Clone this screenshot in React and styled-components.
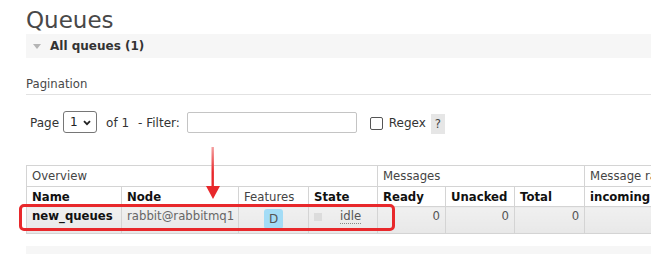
import React from "react";
import styled, { createGlobalStyle } from "styled-components";

const Global = createGlobalStyle`
  html, body { margin: 0; padding: 0; background: #fff; overflow: hidden; }
  body {
    font-family: "DejaVu Sans", Verdana, sans-serif;
    font-size: 11.7px;
    color: #484848;
  }
`;

const Page = styled.div`
  position: relative;
  padding-left: 26px;
  width: 900px;
  height: 254px;
  overflow: hidden;
`;

const Title = styled.h1`
  margin: 0;
  height: 34px;
  line-height: 40px;
  font-size: 23px;
  font-weight: normal;
  color: #484848;
`;

const SectionBar = styled.div`
  height: 24px;
  width: 625px;
  background: #f6f6f6;
  display: flex;
  align-items: center;
  padding-left: 7px;
  box-sizing: border-box;
  font-size: 12px;
  font-weight: bold;
  color: #333;
`;

const Triangle = styled.span`
  width: 0;
  height: 0;
  border-left: 4.5px solid transparent;
  border-right: 4.5px solid transparent;
  border-top: 5px solid #b4b4b4;
  margin-right: 9px;
  margin-top: 1px;
`;

const SubHeading = styled.h3`
  margin: 17px 0 0;
  height: 19px;
  line-height: 19px;
  font-size: 11.7px;
  font-weight: normal;
  color: #484848;
  border-bottom: 1px solid #e2e2e2;
  width: 625px;
`;

const FilterRow = styled.div`
  margin-top: 16px;
  padding-left: 4px;
  height: 22px;
  display: flex;
  align-items: center;
  color: #333;
  font-size: 12px;
`;

const Label = styled.span`
  margin-left: ${(p) => p.$ml || 0}px;
  margin-top: 1px;
  white-space: pre;
`;

const SelectWrap = styled.div`
  position: relative;
  margin-left: 4px;
  width: 34px;
  height: 22px;
  box-sizing: border-box;
  border: 1px solid #767676;
  border-radius: 3px;
`;

const Select = styled.select`
  appearance: none;
  border: none;
  background: transparent;
  width: 100%;
  height: 100%;
  padding: 0 0 0 6px;
  font-family: inherit;
  font-size: 12px;
  color: #222;
  outline: none;
`;

const Chevron = styled.svg`
  position: absolute;
  right: 5px;
  top: 8px;
  pointer-events: none;
`;

const TextInput = styled.input`
  margin-left: 7px;
  width: 170px;
  height: 21px;
  box-sizing: border-box;
  border: 1px solid #c4c4c4;
  border-radius: 2px;
  padding: 0 4px;
  outline: none;
`;

const Check = styled.input`
  appearance: none;
  margin: 2px 0 0 13px;
  width: 13px;
  height: 13px;
  box-sizing: border-box;
  border: 1px solid #555;
  border-radius: 2px;
  background: #fff;
`;

const Help = styled.span`
  margin-left: 5px;
  margin-top: 4px;
  width: 14px;
  height: 20px;
  background: #e6e6e6;
  color: #444;
  display: inline-flex;
  align-items: center;
  justify-content: center;
  font-size: 11.7px;
`;

const Table = styled.table`
  margin-top: 32px;
  border-collapse: collapse;
  table-layout: fixed;
  width: 680px;
  font-size: 11.7px;
`;

const GroupTh = styled.th`
  height: 20px;
  padding: 0 5px;
  border: 1px solid #d4d4d4;
  text-align: left;
  font-weight: normal;
  color: #444;
  background: #fff;
  white-space: nowrap;
  overflow: hidden;
`;

const ColTh = styled.th`
  height: 19px;
  padding: 0 5px;
  border: 1px solid #d4d4d4;
  text-align: left;
  font-weight: ${(p) => (p.$normal ? "normal" : "bold")};
  color: ${(p) => (p.$normal ? "#444" : "#111")};
  background: #fff;
  white-space: nowrap;
  overflow: hidden;
`;

const Td = styled.td`
  height: 27px;
  box-sizing: border-box;
  padding: 2px 5px 0;
  vertical-align: top;
  line-height: 15px;
  border: 1px solid #d4d4d4;
  background: linear-gradient(#f0f0f0, #e8e8e8);
  text-align: ${(p) => p.$align || "left"};
  color: ${(p) => p.$color || "#555"};
  font-weight: ${(p) => (p.$bold ? "bold" : "normal")};
  white-space: nowrap;
`;

const Badge = styled.abbr`
  display: inline-flex;
  vertical-align: top;
  align-items: center;
  justify-content: center;
  width: 19px;
  height: 20px;
  border-radius: 3px;
  background: #a3dcf6;
  color: #555;
  font-size: 12px;
  text-decoration: none;
`;

const StateCell = styled.div`
  display: flex;
  align-items: center;
  height: 15px;
`;

const StateSquare = styled.span`
  width: 8px;
  height: 8px;
  background: #dcdcdc;
  margin-right: 18px;
`;

const Idle = styled.abbr`
  color: #555;
  text-decoration: none;
  border-bottom: 1px dotted #888;
  line-height: 14px;
`;

const BottomBar = styled.div`
  margin-top: 12px;
  height: 20px;
  width: 625px;
  background: #f6f6f6;
`;

const Highlight = styled.div`
  position: absolute;
  left: 19px;
  top: 204px;
  width: 376px;
  height: 27px;
  box-sizing: border-box;
  border: 3px solid #e8282b;
  border-radius: 5px;
  pointer-events: none;
`;

const Arrow = styled.svg`
  position: absolute;
  left: 204px;
  top: 145px;
  pointer-events: none;
`;

export default function App() {
  return (
    <>
      <Global />
      <Page>
        <Title>Queues</Title>
        <SectionBar>
          <Triangle />
          All queues (1)
        </SectionBar>
        <SubHeading>Pagination</SubHeading>
        <FilterRow>
          <Label>Page</Label>
          <SelectWrap>
            <Select defaultValue="1">
              <option value="1">1</option>
            </Select>
            <Chevron width="8" height="6" viewBox="0 0 8 6">
              <path d="M1 1.2 L4 4.2 L7 1.2" fill="none" stroke="#222" strokeWidth="1.8" />
            </Chevron>
          </SelectWrap>
          <Label $ml={9}>of 1</Label>
          <Label $ml={9}>- Filter:</Label>
          <TextInput type="text" />
          <Check type="checkbox" />
          <Label $ml={6}>Regex</Label>
          <Help>?</Help>
        </FilterRow>
        <Table>
          <colgroup>
            <col style={{ width: 95 }} />
            <col style={{ width: 117 }} />
            <col style={{ width: 70 }} />
            <col style={{ width: 69 }} />
            <col style={{ width: 68 }} />
            <col style={{ width: 69 }} />
            <col style={{ width: 70 }} />
            <col style={{ width: 122 }} />
          </colgroup>
          <thead>
            <tr>
              <GroupTh colSpan={4}>Overview</GroupTh>
              <GroupTh colSpan={3}>Messages</GroupTh>
              <GroupTh>Message rates</GroupTh>
            </tr>
            <tr>
              <ColTh>Name</ColTh>
              <ColTh>Node</ColTh>
              <ColTh $normal>Features</ColTh>
              <ColTh>State</ColTh>
              <ColTh>Ready</ColTh>
              <ColTh>Unacked</ColTh>
              <ColTh>Total</ColTh>
              <ColTh>incoming</ColTh>
            </tr>
          </thead>
          <tbody>
            <tr>
              <Td $bold $color="#111">new_queues</Td>
              <Td $color="#666">rabbit@rabbitmq1</Td>
              <Td $align="center">
                <Badge title="durable">D</Badge>
              </Td>
              <Td>
                <StateCell>
                  <StateSquare />
                  <Idle title="idle">idle</Idle>
                </StateCell>
              </Td>
              <Td $align="right">0</Td>
              <Td $align="right">0</Td>
              <Td $align="right">0</Td>
              <Td />
            </tr>
          </tbody>
        </Table>
        <BottomBar />
        <Highlight />
        <Arrow width="18" height="56" viewBox="0 0 18 56">
          <defs>
            <linearGradient id="arrowGrad" x1="0" y1="0" x2="0" y2="1">
              <stop offset="0" stopColor="#f4a0a0" />
              <stop offset="0.6" stopColor="#e8282b" />
              <stop offset="1" stopColor="#e8282b" />
            </linearGradient>
          </defs>
          <rect x="7.5" y="2" width="2.4" height="42" fill="url(#arrowGrad)" />
          <path d="M2 41 L16 41 L9 54 Z" fill="#e8282b" />
        </Arrow>
      </Page>
    </>
  );
}
